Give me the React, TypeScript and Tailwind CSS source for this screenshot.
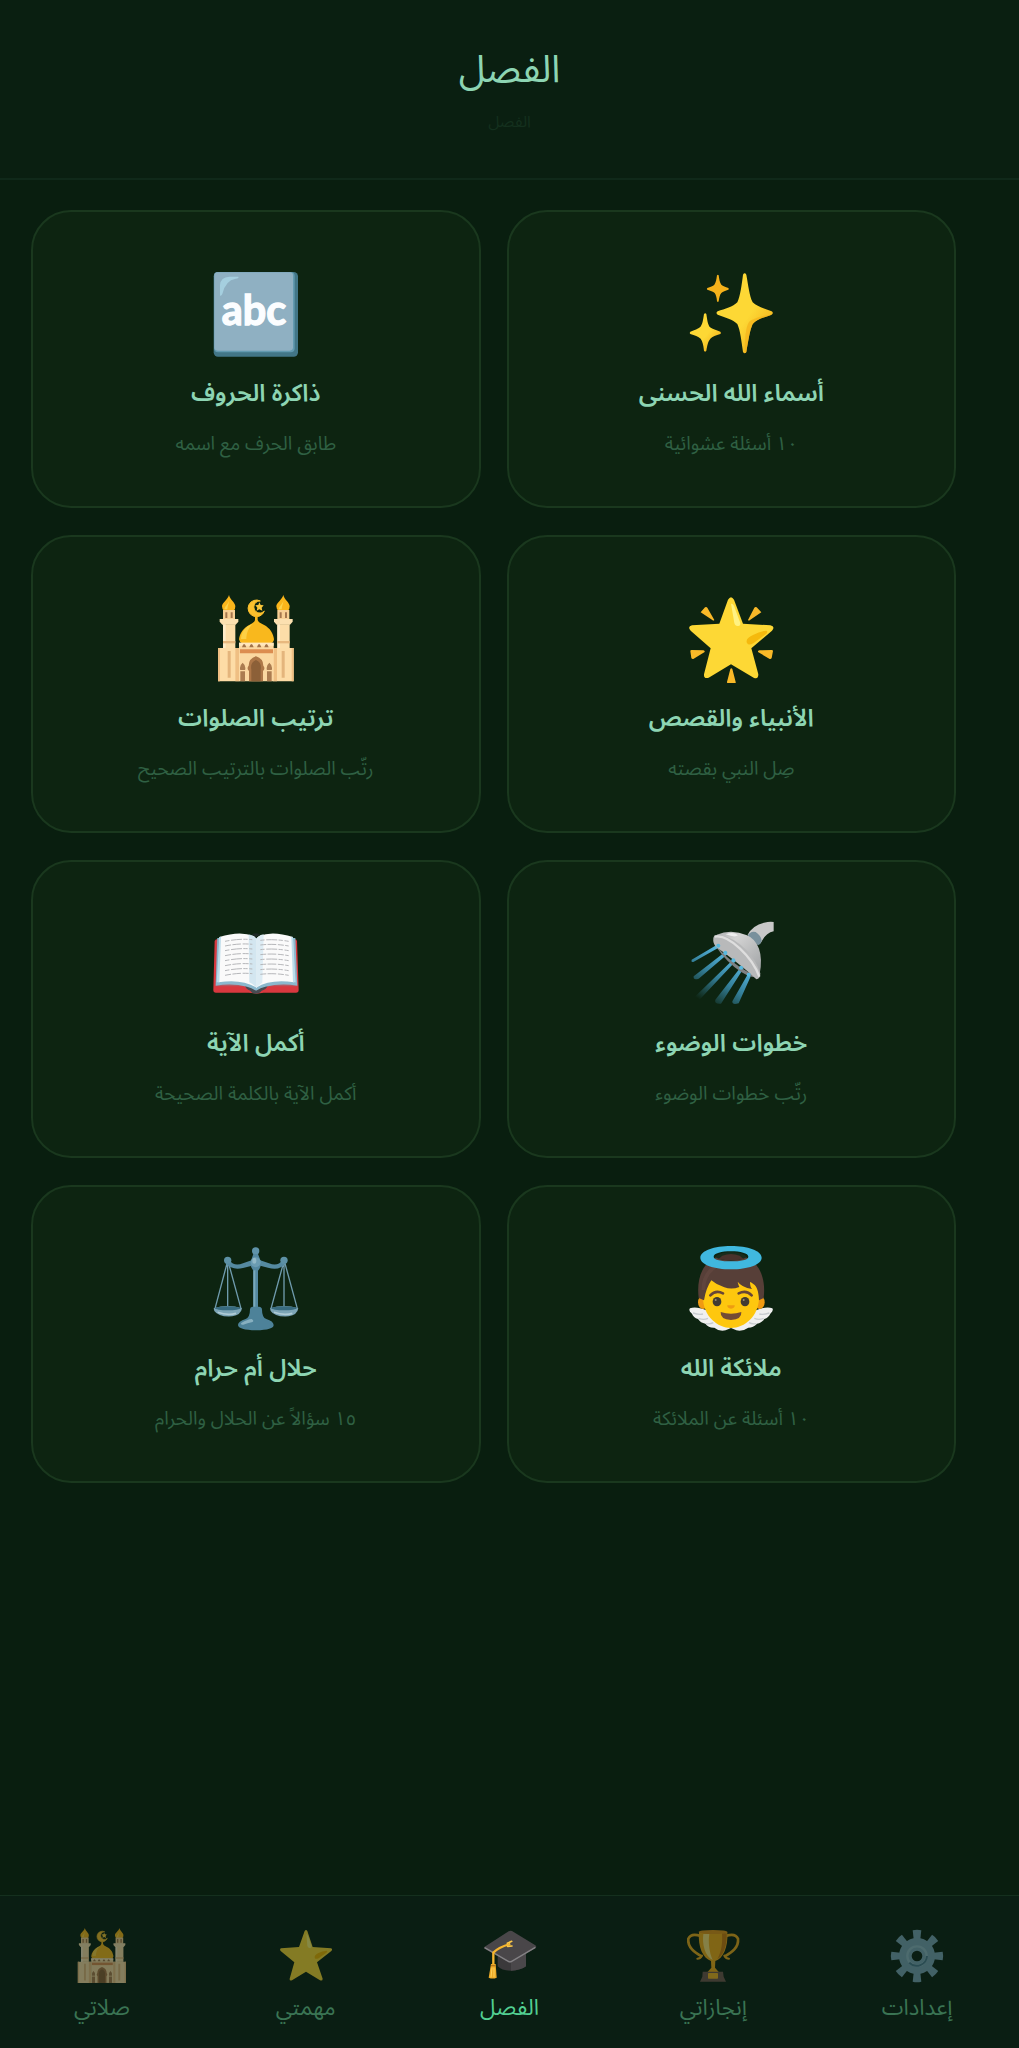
import type { ReactNode } from 'react';

function SparklesIcon() {
  return (
    <svg viewBox="139 60 264 264" className="size-22" aria-hidden="true">
      <defs>
        <linearGradient id="spark" x1="0" y1="0" x2="1" y2="1">
          <stop offset="0.55" stopColor="#fdd835" />
          <stop offset="0.8" stopColor="#f4b81f" />
        </linearGradient>
      </defs>
      <path
        d="M307 74q5-8 10 0c6 33 9 62 19 83 14 13 36 19 57 27q7 5 0 10c-21 8-44 13-57 28-9 20-13 50-19 84q-5 8-10 0c-5-34-8-64-17-84-13-14-37-20-59-28q-7-5 0-10c22-7 46-14 59-27 9-21 13-51 17-83z"
        fill="url(#spark)"
      />
      <path d="M331 211c-14 8-18 38-19 98q4 1 5-3c6-34 10-64 19-84 13-15 36-20 57-28q-30 2-62 17z" fill="#f4b41c" opacity="0.75" />
      <path
        d="M190 192q4-5 7 0c3 19 4 31 11 40 8 6 18 8 31 13q4 4 0 7c-13 4-24 8-30 14-7 9-9 19-12 36q-3 5-7 0c-2-17-4-28-10-36-7-7-18-10-31-14q-4-3 0-7c13-5 23-8 30-14 7-9 8-20 11-39z"
        fill="url(#spark)"
      />
      <path
        d="M229 76q3-4 5 0c2 13 3 21 8 28 5 4 12 6 21 10q3 3 0 5c-9 3-16 5-21 10-5 6-6 13-8 25q-2 4-5 0c-1-12-3-19-7-25-5-5-13-7-22-10q-3-2 0-5c9-4 17-6 21-10 5-7 6-15 8-28z"
        fill="#f5b21b"
      />
    </svg>
  );
}

function AbcIcon() {
  return (
    <svg viewBox="93 60 264 264" className="size-22" aria-hidden="true">
      <rect x="98" y="66" width="253" height="254" rx="13" fill="#427687" />
      <rect x="99" y="66" width="242" height="241" rx="12" fill="#629ab0" />
      <rect x="100" y="67" width="236" height="235" rx="10" fill="#8fb0c2" />
      <path d="M117 137V105q2-24 28-25h27q3 4-8 6-31 5-40 46-3 7-7 5z" fill="#a5cfdf" />
      <text
        x="219"
        y="226"
        textAnchor="middle"
        fontSize="124"
        fontWeight="700"
        fill="#fbfdff"
        stroke="#fbfdff"
        strokeWidth="4"
        fontFamily="Lato, sans-serif"
      >
        abc
      </text>
    </svg>
  );
}

function MosqueIcon({ className }: { className: string }) {
  return (
    <svg viewBox="93 45 264 264" className={className} aria-hidden="true">
      {[0, 163].map((dx) => (
        <g key={dx} transform={`translate(${dx} 0)`}>
          <path d="M144 45c3 14 19 23 19 34q0 10-5 13h-29q-6-5-6-13c0-11 17-19 21-34z" fill="#fbb61b" />
          <path d="M144 60c0 11-12 17-14 28h9c0-11 6-18 5-28z" fill="#fdd44b" />
          <path d="M126 90h36v30h-36z" fill="#f8cf94" />
          <path d="M133 97h6v17h-6zM149 97h6v17h-6z" fill="#a5764d" />
          <path d="M116 117h56v8l-8 9h-40l-8-9z" fill="#fce0b0" />
          <path d="M126 133h37v72h-37z" fill="#fddda8" />
          <path d="M126 133h8v72h-8z" fill="#ffebc8" />
          <path d="M126 183h37v7h-37z" fill="#e8b87e" />
        </g>
      ))}
      <path d="M238 63a25 25 0 1 0 12 30 18 18 0 1 1-12-30z" fill="#fbc02d" stroke="#fbc02d" strokeWidth="3" />
      <path d="m235 67 4 8 9 1-6 7 2 9-9-4-8 4 2-9-6-7 9-1z" fill="#fcc83a" />
      <path d="M222 107h8v13q2 8 18 14c20 10 29 27 31 44q-1 10-10 12h-86q-8-4-9-12c2-18 13-34 32-44q15-7 16-14z" fill="#f9b81d" />
      <path d="M215 131c-22 8-34 25-35 46h16c0-19 7-34 19-46z" fill="#fdd045" />
      <path d="M174 188h104v116H174z" fill="#fbd8a1" />
      <path d="M174 188h104v9H174z" fill="#ffe7bd" />
      <path d="M183 202q6-20 13 0zM205 202q6-20 13 0zM228 202q6-20 13 0zM250 202q6-20 13 0z" fill="#a1734b" />
      <path d="M176 208h101v12H176z" fill="#dc8d50" />
      <path d="M111 204h65v100h-65zM276 204h62v100h-62z" fill="#fddca6" />
      <path d="M111 204h6v100h-6zM163 204h11v100h-11zM278 204h10v100h-10zM332 204h6v100h-6z" fill="#efbf83" />
      <path d="M140 213h9v80h-9zM302 213h9v80h-9z" fill="#e4b57c" />
      <path d="M204 304v-31q-8-7-1-16 0-21 22-28 22 7 22 28 7 9-1 16v31z" fill="#ad7748" />
      <path d="M211 304v-35q-4-22 14-29 18 7 14 29v35z" fill="#8c6038" />
      <path d="M178 304v-33q-4-14 7-23 11 9 7 23v33zM258 304v-33q-4-14 7-23 11 9 7 23v33z" fill="#ab7c50" />
      <path d="M175 272h21M255 272h20" stroke="#fbd8a1" strokeWidth="4" />
    </svg>
  );
}

function GlowingStarIcon() {
  return (
    <svg viewBox="139 45 264 264" className="size-22" aria-hidden="true">
      <path
        d="m180 97 13-15q4-3 7 1l21 37q-2 3-6 0zM362 97l-14-15q-4-3-7 1l-19 37q2 3 6 0zM149 213l3 21q2 4 6 3l34-21q1-4-4-5l-35-1q-4 0-4 3zM397 213l-4 21q-2 4-6 3l-35-21q-1-4 4-5l37-1q4 0 4 3zM269 267l-10 39q0 5 5 5h17q5 0 4-5l-10-39q-3-4-6 0z"
        fill="#f9b928"
      />
      <path
        d="M262 59q9-15 18 0l27 72 82 5q16 4 5 16l-62 53 21 78q0 16-14 10l-68-40-67 40q-15 5-14-10l20-78-60-53q-11-12 4-16l82-5z"
        fill="#fdd835"
      />
      <path d="M271 71q8-1 12 15l16 43q1 10-8 9-8 0-10-9z" fill="#fff282" />
      <path d="M377 152q8 4-5 13l-33 24q-15 9-20 0-6-14 18-24 21-12 40-13z" fill="#f5b90d" />
    </svg>
  );
}

function BookIcon() {
  const lines = [124, 138, 152, 167, 182, 197, 212, 226];
  return (
    <svg viewBox="93 60 264 264" className="size-22" aria-hidden="true">
      <path d="M101 123q2-6 10-6h228q8 0 9 6l5 147q0 8-8 8h-97l-22 3-23-3h-98q-8 0-8-8z" fill="#d9383f" />
      <path d="M107 121h237l3 138H104z" fill="#b9565f" />
      <path d="M191 255h70q-3 12-19 17-6 9-18 9-11 0-16-9-14-5-17-17z" fill="#484b51" />
      <path d="M109 114h234l6 143q-50-8-96 3-14 3-28 12-14-9-27-12-44-11-94-3z" fill="#8bb8cd" />
      <path d="M115 111q62-20 103-3 8 3 9 12v143q-45-27-114-16z" fill="#fafafa" />
      <path d="M336 111q-62-20-101-3-8 3-10 12v143q45-27 114-16z" fill="#fafafa" />
      <path d="M115 111 107 247h8l5-137zM336 111l8 136h-8l-5-137z" fill="#bcdcea" />
      <path d="M203 103q22 4 24 18v142q-13-13-22-16z" fill="#c5dfec" opacity="0.75" />
      <path d="M248 103q-20 4-22 18v142q10-10 18-15z" fill="#ddecf4" />
      <path d="M212 104q13-8 25 0-8 3-12 9-4-6-13-9z" fill="#1d2825" />
      {lines.map((y, i) => (
        <g key={y} fill="none" stroke="#b6b7ba" strokeWidth="3" strokeDasharray={i % 2 ? '18 4 26 5' : '13 5 33 4'}>
          <path d={`M132 ${y}q44-9 82-5`} />
          <path d={`M238 ${y - 3}q40-5 85 3`} />
        </g>
      ))}
    </svg>
  );
}

function ShowerIcon() {
  return (
    <svg viewBox="139 60 264 264" className="size-22" aria-hidden="true">
      <defs>
        <linearGradient id="water" gradientUnits="userSpaceOnUse" x1="290" y1="150" x2="185" y2="305">
          <stop offset="0.15" stopColor="#55b5dd" />
          <stop offset="0.55" stopColor="#347f99" />
          <stop offset="1" stopColor="#347f99" stopOpacity="0" />
        </linearGradient>
        <linearGradient id="metal" x1="0" y1="0" x2="1" y2="1">
          <stop offset="0" stopColor="#aeb0b2" />
          <stop offset="0.3" stopColor="#d3d3d3" />
          <stop offset="1" stopColor="#9da0a2" />
        </linearGradient>
      </defs>
      <path
        d="m233 132 6 8-81 46q-8 2-5-7zM254 155l7 7-87 74q-17 6-15-7zM279 177l6 7-112 119q-20 8-15-8zM301 200l8 5-68 106q-21 2-17-12zM323 220l9 5-38 85q-20 6-19-6z"
        fill="url(#water)"
      />
      <path d="M321 104q15-28 49-36 17-4 29-2v28q-24 4-39 36-24 0-39-26z" fill="#c8c8c8" />
      <path d="M321 109q7-17 24-13 18 13 18 26-3 11-11 14z" fill="#78909c" />
      <path d="M218 125q47 65 135 107-28 4-72-31-43-37-63-76z" fill="#7e8184" />
      <path d="M228 104q45-18 91 2 24 10 36 40 11 32 2 76-73-55-129-118z" fill="url(#metal)" />
      <path d="M218 114q2-12 20-8 38 3 83 48 27 31 38 66 0 17-12 18-19-19-53-46-39-31-67-50-11-12-9-28z" fill="#b8b9ba" />
      <path d="M222 110q32-6 76 36 41 38 58 84" fill="none" stroke="#dedede" strokeWidth="7" />
      <path d="M255 103q24-9 37 3-8 8-37-3z" fill="#eeeeef" />
      {[
        [233, 137],
        [254, 158],
        [278, 181],
        [301, 203],
        [324, 224],
      ].map(([cx, cy]) => (
        <circle key={cx} cx={cx} cy={cy} r="6" fill="#58b9df" />
      ))}
    </svg>
  );
}

function ScalesIcon() {
  return (
    <svg viewBox="93 60 264 264" className="size-22" aria-hidden="true">
      <g fill="none" stroke="#6f9bad" strokeWidth="4">
        <path d="m140 108-38 143M140 108v145M141 108l39 143M309 108l-39 143M309 108v145M310 108l39 143" />
      </g>
      <path d="M145 105q14 21 41 10l30-11h17l31 11q27 11 40-10l10 9q-18 25-53 14l-35-9-40 10q-33 8-52-14z" fill="#558aa1" />
      <circle cx="140" cy="106" r="11" fill="#5d91a6" />
      <circle cx="309" cy="106" r="11" fill="#5d91a6" />
      <circle cx="224" cy="78" r="11" fill="#5f93aa" />
      <path d="M217 87h14l9 23q0 19-9 27v111h-14V137q-10-10-8-27z" fill="#5488a0" />
      <path d="M217 136h6v112h-6z" fill="#79a9bb" />
      <circle cx="224" cy="112" r="15" fill="#6b9cb2" />
      <ellipse cx="220" cy="107" rx="6" ry="9" fill="#91b8c7" />
      <path d="M207 253q0-7 8-8h19q9 1 9 9 0 23 13 28 21 6 22 18 0 15-53 16-53-1-54-16 0-11 23-18 13-5 13-29z" fill="#4d8299" />
      <path d="M181 294q18-11 31-12 10 7 0 10-12 2-25 7-10 1-6-5z" fill="#87b0c0" />
      <path d="M98 250q42-14 85 0-3 20-29 24-41 3-54-16z" fill="#7ca5b6" />
      <path d="M267 250q42-14 85 0-3 20-29 24-41 3-54-16z" fill="#7ca5b6" />
      <ellipse cx="140" cy="250" rx="38" ry="6" fill="#386b7f" />
      <ellipse cx="309" cy="250" rx="38" ry="6" fill="#386b7f" />
      <path d="M110 262q30 10 55 3M279 262q30 10 55 3" fill="none" stroke="#afcbd5" strokeWidth="5" />
    </svg>
  );
}

function AngelIcon() {
  return (
    <svg viewBox="139 60 264 264" className="size-22" aria-hidden="true">
      <path
        d="M148 250q18-7 49 6l73 53 76-53q31-13 49-6 5 7-6 16-5 12-18 16-8 12-22 14-11 12-26 12-19 13-36 8l-16-7-16 7q-18 5-34-8-17 1-27-12-14-2-22-14-14-4-18-16-12-9-6-16z"
        fill="#f0f0f0"
      />
      <path d="M157 264q18 6 30 3M174 280q14 6 28 0M196 296q13 2 22-3M386 264q-18 6-30 3M369 280q-14 6-28 0M347 296q-13 2-22-3" fill="none" stroke="#c8ccd0" strokeWidth="4" />
      <ellipse cx="187" cy="232" rx="15" ry="20" fill="#f09a12" />
      <ellipse cx="357" cy="232" rx="15" ry="20" fill="#f09a12" />
      <path d="M271 121c-64 0-85 43-84 98 1 54 43 90 84 90s83-36 84-90c1-55-20-98-84-98z" fill="#fec70e" />
      <path d="M174 219c-8-65 15-130 97-132 82 2 106 67 98 132l-14 7c-1-22-4-36-13-46q-11-9-14-9 0 15 6 21-31-5-43-22 2 9 5 16-23 9-45 1-23-7-39-21-16 23-22 60z" fill="#573f38" />
      <path d="M188 195q0-61 60-81" fill="none" stroke="#6f5048" strokeWidth="11" opacity="0.4" />
      <path
        d="M271 63c50 0 92 14 92 35s-42 35-92 35-92-14-92-35 42-35 92-35zm0 16c-28 0-52 6-52 16s24 14 52 14 52-4 52-14-24-16-52-16z"
        fill="#40b8df"
        fillRule="evenodd"
      />
      <path d="M271 82c-24 0-42 5-47 15q19 10 47 10t47-10c-5-10-23-15-47-15z" fill="#182c1d" />
      <path d="M245 92q26-10 52 0l12 10q-35 8-76 0z" fill="#49322c" />
      <path d="M209 211q16-17 38-6M294 205q23-11 39 6" fill="none" stroke="#674536" strokeWidth="8" strokeLinecap="round" />
      <ellipse cx="229" cy="230" rx="13" ry="14" fill="#423b32" />
      <ellipse cx="313" cy="230" rx="13" ry="14" fill="#423b32" />
      <circle cx="225" cy="225" r="3" fill="#9b8b72" />
      <circle cx="309" cy="225" r="3" fill="#9b8b72" />
      <path d="M260 241h22q1 9-11 10-12-1-11-10z" fill="#ee9c11" />
      <path d="M240 261q31 10 62 0 2 22-31 24-33-2-31-24z" fill="#734b35" />
    </svg>
  );
}

function GearIcon({ className }: { className: string }) {
  return (
    <svg viewBox="1137 146 168 168" className={className} aria-hidden="true">
      {[0, 45, 90, 135, 180, 225, 270, 315].map((angle) => (
        <path key={angle} d="m1208 153q13-3 26 0l-4 34h-18z" fill="#7ba4b8" transform={`rotate(${angle} 1221 230)`} />
      ))}
      <circle cx="1221" cy="230" r="35" fill="none" stroke="#7ba4b8" strokeWidth="38" />
      <circle cx="1221" cy="230" r="29" fill="none" stroke="#90b8c9" strokeWidth="7" />
      <path d="M1198 250a31 31 0 0 0 53-20" fill="none" stroke="#4b7a91" strokeWidth="6" />
    </svg>
  );
}

function TrophyIcon({ className }: { className: string }) {
  return (
    <svg viewBox="525 146 168 168" className={className} aria-hidden="true">
      <path d="M572 170q-29-10-37 8c-3 27 19 41 41 54M647 170q29-10 37 8c3 27-19 41-41 54" fill="none" stroke="#f0a91c" strokeWidth="8" />
      <path d="M562 238q9 0 14-9M657 238q-9 0-14-9" fill="none" stroke="#f0a91c" strokeWidth="6" strokeLinecap="round" />
      <path d="M567 158h85c3 46-13 80-36 87l-1 20 12 14h-35l12-14-1-20c-24-8-40-42-36-87z" fill="#f6ac18" />
      <path d="M580 164h18c-4 25 0 55 10 78-24-12-32-48-28-78z" fill="#ffe27a" />
      <path d="M636 162h14c2 36-10 66-28 78 13-24 16-51 14-78z" fill="#d07c10" />
      <ellipse cx="609" cy="158" rx="43" ry="6" fill="#e6951a" />
      <path d="M578 277h61l2 15 7 15h-78l7-15z" fill="#735750" />
      <rect x="594" y="281" width="30" height="17" rx="2" fill="#f6b323" />
    </svg>
  );
}

function CapIcon({ className }: { className: string }) {
  return (
    <svg viewBox="125 65 168 168" className={className} aria-hidden="true">
      <path d="M172 140v40q12 13 40 13 30-1 45-13v-44z" fill="#3b393b" />
      <path d="M212 150v43q30-1 45-13v-44z" fill="#4a474a" />
      <path d="m132 122 73-47q5-3 10-1l70 43q5 4 1 8l-72 42q-5 3-10 0l-71-40q-4-2-1-5z" fill="#494649" />
      <path d="m133 124 71 41q5 3 10 0l71-42" fill="none" stroke="#848285" strokeWidth="4" />
      <path d="M210 113q-35 9-51 26v39" fill="none" stroke="#f5b52f" strokeWidth="7" />
      <path d="m201 111 13-6M202 120l13-1" stroke="#fbc748" strokeWidth="5" strokeLinecap="round" />
      <path d="M152 173h14l3 41q-12 5-24 0z" fill="#edaa27" />
      <path d="M152 178h14" stroke="#b97a1c" strokeWidth="4" />
      <path d="m155 184-3 29M161 184v29" stroke="#ffd25b" strokeWidth="3" />
    </svg>
  );
}

function StarIcon({ className }: { className: string }) {
  return (
    <svg viewBox="833 146 168 168" className={className} aria-hidden="true">
      <path d="M913 155q4-6 8 0l16 48 55 4q6 2 1 8l-43 34 17 49q0 8-8 5l-42-26-42 26q-8 3-7-5l14-49-41-34q-4-6 1-8l54-4z" fill="#fdd835" />
      <path d="M918 163q3 1 6 9l10 29q0 7-7 5-5-1-6-7z" fill="#fff176" />
      <path d="M979 214q5 2-3 8l-21 15q-10 4-12-2-1-8 10-13 13-7 26-8z" fill="#f4b400" />
    </svg>
  );
}

type Game = { title: string; text: string; icon: ReactNode };

const games: Game[] = [
  { title: 'أسماء الله الحسنى', text: '١٠ أسئلة عشوائية', icon: <SparklesIcon /> },
  { title: 'ذاكرة الحروف', text: 'طابق الحرف مع اسمه', icon: <AbcIcon /> },
  { title: 'الأنبياء والقصص', text: 'صِل النبي بقصته', icon: <GlowingStarIcon /> },
  { title: 'ترتيب الصلوات', text: 'رتّب الصلوات بالترتيب الصحيح', icon: <MosqueIcon className="size-22" /> },
  { title: 'خطوات الوضوء', text: 'رتّب خطوات الوضوء', icon: <ShowerIcon /> },
  { title: 'أكمل الآية', text: 'أكمل الآية بالكلمة الصحيحة', icon: <BookIcon /> },
  { title: 'ملائكة الله', text: '١٠ أسئلة عن الملائكة', icon: <AngelIcon /> },
  { title: 'حلال أم حرام', text: '١٥ سؤالاً عن الحلال والحرام', icon: <ScalesIcon /> },
];

const tabs = [
  { name: 'إعدادات', Icon: GearIcon, active: false },
  { name: 'إنجازاتي', Icon: TrophyIcon, active: false },
  { name: 'الفصل', Icon: CapIcon, active: true },
  { name: 'مهمتي', Icon: StarIcon, active: false },
  { name: 'صلاتي', Icon: MosqueIcon, active: false },
];

function GameCard({ title, text, icon }: Game) {
  return (
    <button
      type="button"
      className="flex flex-col items-center rounded-[40px] border-2 border-[#1a381e] bg-[#0d2411] px-4 pt-[58px] pb-[46px]"
    >
      {icon}
      <span className="mt-4 text-2xl leading-10 font-semibold text-[#8dd5b3]">{title}</span>
      <span className="mt-3.5 text-[19px] leading-8 text-[#2f6043]">{text}</span>
    </button>
  );
}

export default function App() {
  return (
    <div
      dir="rtl"
      lang="ar"
      className="flex min-h-screen flex-col bg-[#091e0f] font-['Noto_Sans_Arabic','Noto_Sans','DejaVu_Sans',sans-serif]"
    >
      <header className="flex flex-col items-center border-b-2 border-[#10291a] bg-[#0a1f11] pt-[38px] pb-[38px]">
        <h1 className="text-[38px] leading-16 text-[#8dd5b3]">الفصل</h1>
        <p className="mt-0.5 text-base leading-9 text-[#14301e]">الفصل</p>
      </header>
      <main className="grid grid-cols-2 gap-x-[26px] gap-y-[27px] pt-[30px] pr-[63px] pb-8 pl-[31px]">
        {games.map((game) => (
          <GameCard key={game.title} {...game} />
        ))}
      </main>
      <nav className="mt-auto grid grid-cols-5 border-t border-[#14301e] bg-[#0a1e13] pt-8 pb-5">
        {tabs.map(({ name, Icon, active }) => (
          <a
            key={name}
            href="#"
            aria-current={active ? 'page' : undefined}
            className={`flex flex-col items-center gap-1 ${active ? 'text-[#52cf92]' : 'text-[#3a7453]'}`}
          >
            <Icon className={active ? 'size-14' : 'size-14 opacity-50'} />
            <span className="text-[22px] leading-10">{name}</span>
          </a>
        ))}
      </nav>
    </div>
  );
}
